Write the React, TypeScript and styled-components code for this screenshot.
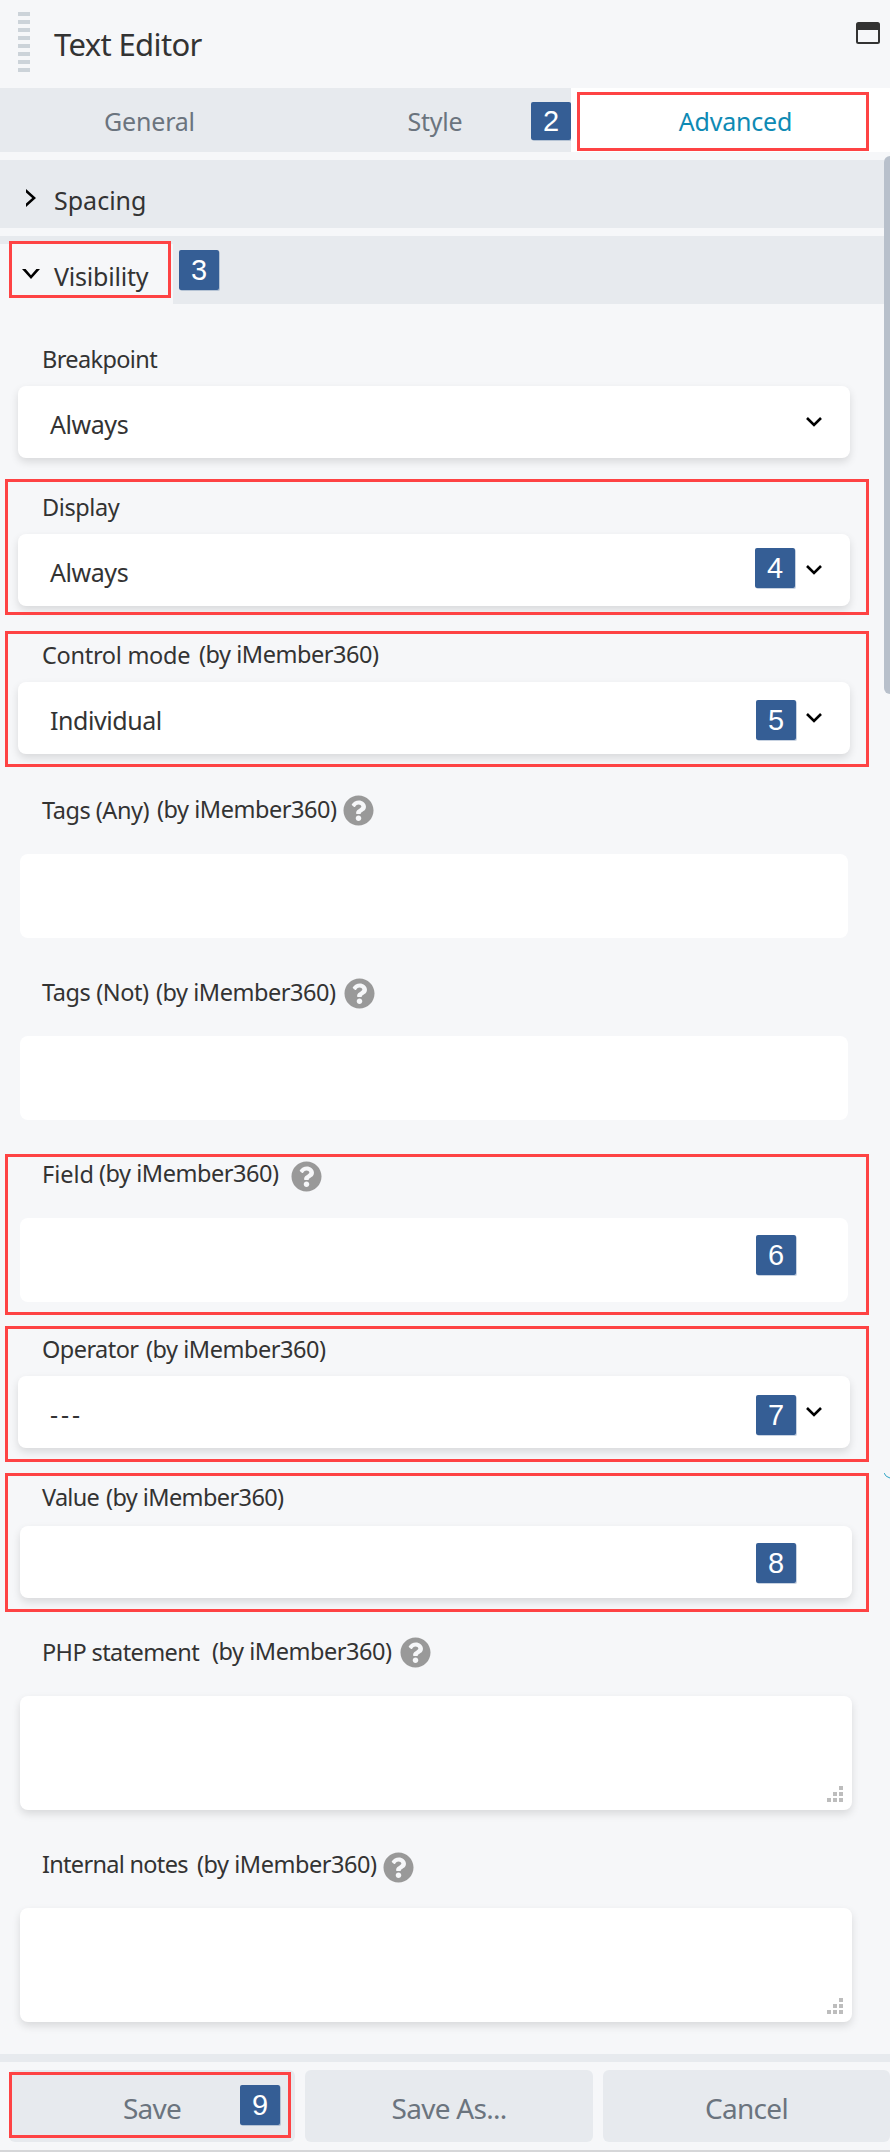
import React from "react";
import styled, { createGlobalStyle } from "styled-components";
import { FaQuestionCircle } from "react-icons/fa";

const GlobalStyle = createGlobalStyle`
  body {
    margin: 0;
    background: #f6f7f9;
    font-family: "Noto Sans", "Open Sans", sans-serif;
    color: #333;
  }
  * { box-sizing: border-box; }
`;

const Panel = styled.div`
  position: relative;
  width: 890px;
  height: 2152px;
  overflow: hidden;
  display: flex;
  flex-direction: column;
  background: #f6f7f9;
`;

const Header = styled.header`
  display: flex;
  flex: none;
  align-items: flex-start;
  height: 88px;
  padding: 12px 10px 0 18px;
`;

const Grip = styled.div`
  width: 12px;
  height: 60px;
  background: repeating-linear-gradient(#ccd3d9 0 4px, transparent 4px 8px);
`;

const Title = styled.h1`
  flex: 1;
  margin: 11px 0 0 24px;
  font-size: 31px;
  font-weight: 400;
  line-height: 42px;
  letter-spacing: -0.62px;
`;

const WindowIcon = styled.svg`
  width: 24px;
  height: 22px;
  margin-top: 10px;
`;

const Tabs = styled.nav`
  display: flex;
  flex: none;
  height: 64px;
  margin-bottom: 8px;
  background: #e7eaee;
`;

const Tab = styled.div<{ $width: number; $active?: boolean }>`
  position: relative;
  width: ${(p) => p.$width}px;
  padding-left: ${(p) => (p.$active ? 10 : 0)}px;
  text-align: center;
  font-size: 25px;
  line-height: 66px;
  letter-spacing: -0.2px;
  color: ${(p) => (p.$active ? "#0e8ab4" : "#6b747e")};
  background: ${(p) => (p.$active ? "#fff" : "transparent")};
`;

const Section = styled.div`
  position: relative;
  display: flex;
  flex: none;
  width: 884px;
  height: 68px;
  margin-bottom: 8px;
  background: #e7eaee;
`;

const SectionHead = styled.div<{ $open?: boolean }>`
  display: flex;
  align-items: center;
  width: 173px;
  height: 60px;
  margin-top: 8px;
  padding: 3px 0 0 22px;
  font-size: 25px;
  letter-spacing: ${(p) => (p.$open ? -0.2 : 0)}px;
  background: ${(p) => (p.$open ? "#f6f7f9" : "transparent")};
`;

const SectionName = styled.span`
  margin-left: 14px;
`;

const SectionIcon = styled.svg`
  width: 18px;
  height: 18px;
  margin-top: -3px;
`;

const Fields = styled.main`
  display: flex;
  flex: none;
  flex-direction: column;
`;

const Field = styled.div<{ $before: number }>`
  position: relative;
  padding-top: ${(p) => p.$before}px;
`;

const LabelRow = styled.div<{ $gap: number }>`
  display: flex;
  height: 32px;
  margin-bottom: ${(p) => p.$gap}px;
  padding-left: 42px;
  font-size: 23.5px;
  line-height: 32px;
  white-space: nowrap;
`;

const Name = styled.span<{ $width?: number; $spacing: number }>`
  flex: none;
  width: ${(p) => (p.$width ? `${p.$width}px` : "auto")};
  letter-spacing: ${(p) => p.$spacing}px;
`;

const Source = styled.span<{ $lift: number; $spacing: number }>`
  flex: none;
  width: 181px;
  margin-top: ${(p) => -p.$lift}px;
  letter-spacing: ${(p) => p.$spacing}px;
`;

const Help = styled(FaQuestionCircle)<{ $left: number; $top: number }>`
  flex: none;
  width: 31px;
  height: 31px;
  margin: ${(p) => p.$top}px 0 0 ${(p) => p.$left}px;
  color: #999;
`;

const Control = styled.div`
  border-radius: 8px;
  background: #fff;
`;

const SelectBox = styled(Control)`
  display: flex;
  align-items: center;
  justify-content: space-between;
  width: 832px;
  height: 72px;
  margin-left: 18px;
  padding: 3px 28px 0 32px;
  font-size: 25px;
  box-shadow: 0 4px 8px rgba(0, 0, 0, 0.12);
`;

const SelectValue = styled.span<{ $spacing: number }>`
  letter-spacing: ${(p) => p.$spacing}px;
`;

const SelectArrow = styled.svg`
  width: 16px;
  height: 10px;
  margin-top: -4px;
`;

const TagsBox = styled(Control)`
  width: 828px;
  height: 84px;
  margin-left: 20px;
`;

const TextBox = styled(Control)<{ $height: number }>`
  display: flex;
  align-items: flex-end;
  justify-content: flex-end;
  width: 832px;
  height: ${(p) => p.$height}px;
  margin-left: 20px;
  padding: 0 9px 8px 0;
  box-shadow: 0 4px 8px rgba(0, 0, 0, 0.12);
`;

const ResizeGrip = styled.svg`
  width: 16px;
  height: 16px;
`;

/* Tutorial annotations drawn over the panel */
const Outline = styled.div<{ $x: number; $y: number; $w: number; $h: number }>`
  position: absolute;
  left: ${(p) => p.$x}px;
  top: ${(p) => p.$y}px;
  width: ${(p) => p.$w}px;
  height: ${(p) => p.$h}px;
  border: 3px solid #fe4344;
  pointer-events: none;
`;

const Badge = styled.div<{ $x: number; $y: number; $h?: number }>`
  position: absolute;
  left: ${(p) => p.$x}px;
  top: ${(p) => p.$y}px;
  width: 40px;
  height: ${(p) => p.$h ?? 40}px;
  border-radius: 2px;
  background: #355e95;
  box-shadow: 1px 1px 0 rgba(53, 94, 149, 0.28);
  color: #fff;
  font-family: "Liberation Sans", Arial, sans-serif;
  font-size: 29px;
  line-height: ${(p) => (p.$h ?? 40) + 1}px;
  letter-spacing: 0;
  text-align: center;
`;

const Footer = styled.footer`
  position: relative;
  display: flex;
  flex: none;
  gap: 10px;
  height: 98px;
  margin-top: 32px;
  padding: 8px 0 0 9px;
  border-top: 8px solid #e7eaee;
  border-bottom: 2px solid #d5d6d8;
`;

const FooterButton = styled.button<{ $width: number }>`
  flex: none;
  width: ${(p) => p.$width}px;
  height: 72px;
  padding: 3px 0 0;
  border: 0;
  border-radius: 6px;
  background: #e7eaee;
  color: #6b747e;
  font: 400 28px "Noto Sans", sans-serif;
  letter-spacing: -0.72px;
`;

const ScrollThumb = styled.div`
  position: absolute;
  left: 884px;
  top: 156px;
  width: 12px;
  height: 538px;
  border-radius: 6px;
  background: #b8c0cb;
`;

const EdgeArc = styled.svg`
  position: absolute;
  left: 884px;
  top: 1473px;
  width: 6px;
  height: 6px;
`;

const Arrow = () => (
  <SelectArrow viewBox="0 0 16 10">
    <path d="M1 1 L8 8 L15 1" fill="none" stroke="#000" strokeWidth="2.6" />
  </SelectArrow>
);

const Dots = () => (
  <ResizeGrip viewBox="0 0 16 16" fill="#bdbdbd">
    {[[12, 0], [6, 6], [12, 6], [0, 12], [6, 12], [12, 12]].map(([x, y]) => (
      <rect key={`${x}-${y}`} x={x} y={y} width="4" height="4" />
    ))}
  </ResizeGrip>
);

type FieldSpec = {
  name: string;
  spacing: number;
  before: number;
  gap: number;
  nameWidth?: number;
  lift?: number;
  sourceSpacing?: number;
  help?: [number, number];
  kind: "select" | "tags" | "text" | "area";
  value?: string;
  valueSpacing?: number;
  outline?: [number, number];
  badge?: [string, number, number];
};

/* Outline and badge offsets are measured from the top of their field. */
const fields: FieldSpec[] = [
  { name: "Breakpoint", spacing: -0.62, before: 31, gap: 11, kind: "select", value: "Always", valueSpacing: -0.44 },
  { name: "Display", spacing: -0.4, before: 33, gap: 11, kind: "select", value: "Always", valueSpacing: -0.44, outline: [21, 136], badge: ["4", 755, 90] },
  { name: "Control mode", spacing: -0.29, before: 33, gap: 11, nameWidth: 157, lift: 1, kind: "select", value: "Individual", valueSpacing: -0.44, outline: [25, 136], badge: ["5", 756, 94] },
  { name: "Tags (Any)", spacing: -0.48, before: 40, gap: 28, nameWidth: 115, lift: 1, help: [5, 1], kind: "tags" },
  { name: "Tags (Not)", spacing: -0.41, before: 38, gap: 28, nameWidth: 114, help: [7, 2], kind: "tags" },
  { name: "Field", spacing: 0, before: 38, gap: 28, nameWidth: 57, lift: 1, help: [11, 3], kind: "tags", outline: [34, 161], badge: ["6", 756, 115] },
  { name: "Operator", spacing: -0.55, before: 31, gap: 11, nameWidth: 104, kind: "select", value: "---", valueSpacing: 3, outline: [24, 136], badge: ["7", 756, 93] },
  { name: "Value", spacing: -0.75, before: 33, gap: 13, nameWidth: 64, sourceSpacing: -0.6, kind: "text", outline: [25, 139], badge: ["8", 756, 95] },
  { name: "PHP statement", spacing: -0.6, before: 38, gap: 28, nameWidth: 170, lift: 1, help: [7, 1], kind: "area" },
  { name: "Internal notes", spacing: -0.7, before: 38, gap: 28, nameWidth: 155, help: [5, 4], kind: "area" },
];

const FieldBlock = ({ f }: { f: FieldSpec }) => (
  <Field $before={f.before}>
    <LabelRow $gap={f.gap}>
      <Name $width={f.nameWidth} $spacing={f.spacing}>{f.name}</Name>
      {f.nameWidth && <Source $lift={f.lift ?? 0} $spacing={f.sourceSpacing ?? -0.47}>(by iMember360)</Source>}
      {f.help && <Help $left={f.help[0]} $top={f.help[1]} />}
    </LabelRow>
    {f.kind === "select" && (
      <SelectBox>
        <SelectValue $spacing={f.valueSpacing ?? 0}>{f.value}</SelectValue>
        <Arrow />
      </SelectBox>
    )}
    {f.kind === "tags" && <TagsBox />}
    {f.kind === "text" && <TextBox $height={72} />}
    {f.kind === "area" && <TextBox $height={114}><Dots /></TextBox>}
    {f.outline && <Outline $x={5} $y={f.outline[0]} $w={864} $h={f.outline[1]} />}
    {f.badge && <Badge $x={f.badge[1]} $y={f.badge[2]}>{f.badge[0]}</Badge>}
  </Field>
);

export default function App() {
  return (
    <>
      <GlobalStyle />
      <Panel>
        <Header>
          <Grip />
          <Title>Text Editor</Title>
          <WindowIcon viewBox="0 0 24 22">
            <rect x="1" y="1" width="22" height="20" rx="1.5" fill="none" stroke="#333" strokeWidth="2" />
            <rect x="1" y="1" width="22" height="7" fill="#333" />
          </WindowIcon>
        </Header>
        <Tabs>
          <Tab $width={299}>General</Tab>
          <Tab $width={272}>
            Style
            <Badge $x={232} $y={14} $h={38}>2</Badge>
          </Tab>
          <Tab $width={319} $active>
            Advanced
            <Outline $x={6} $y={4} $w={292} $h={59} />
          </Tab>
        </Tabs>
        <Section>
          <SectionHead>
            <SectionIcon viewBox="0 0 18 18">
              <path d="M4 0 L14 9 L4 18 V14.4 L10.2 9 L4 3.6 Z" fill="#000" />
            </SectionIcon>
            <SectionName>Spacing</SectionName>
          </SectionHead>
        </Section>
        <Section>
          <SectionHead $open>
            <SectionIcon viewBox="0 0 18 18">
              <path d="M0 4 L9 14 L18 4 H14.4 L9 10.2 L3.6 4 Z" fill="#000" />
            </SectionIcon>
            <SectionName>Visibility</SectionName>
          </SectionHead>
          <Outline $x={9} $y={5} $w={162} $h={57} />
          <Badge $x={179} $y={14}>3</Badge>
        </Section>
        <Fields>
          {fields.map((f) => <FieldBlock key={f.name} f={f} />)}
        </Fields>
        <Footer>
          <FooterButton $width={286}>Save</FooterButton>
          <FooterButton $width={288}>Save As...</FooterButton>
          <FooterButton $width={287}>Cancel</FooterButton>
          <Outline $x={9} $y={10} $w={282} $h={66} />
          <Badge $x={240} $y={23}>9</Badge>
        </Footer>
        <ScrollThumb />
        <EdgeArc viewBox="0 0 6 6">
          <path d="M0 0 Q1.5 4 6 5" fill="none" stroke="#2ba3c4" />
        </EdgeArc>
      </Panel>
    </>
  );
}
